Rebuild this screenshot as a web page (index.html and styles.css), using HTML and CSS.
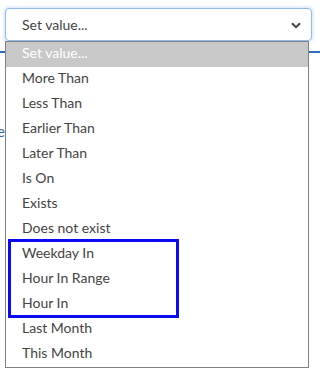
FILE: index.html
```html
<!DOCTYPE html>
<html>
<head>
<meta charset="utf-8">
<link rel="stylesheet" href="styles.css">
</head>
<body>
<div class="field-wrap">
  <div class="select">
    <span class="select-text">Set value...</span>
    <svg class="chevron" width="10" height="7" viewBox="0 0 10 7"><path d="M1 1.2 L5 5.2 L9 1.2" fill="none" stroke="#444" stroke-width="2"/></svg>
  </div>
  <ul class="menu">
    <li class="item selected">Set value...</li>
    <li class="item">More Than</li>
    <li class="item">Less Than</li>
    <li class="item">Earlier Than</li>
    <li class="item">Later Than</li>
    <li class="item">Is On</li>
    <li class="item">Exists</li>
    <li class="item">Does not exist</li>
    <li class="item">Weekday In</li>
    <li class="item">Hour In Range</li>
    <li class="item">Hour In</li>
    <li class="item">Last Month</li>
    <li class="item">This Month</li>
    <li class="highlight"></li>
  </ul>
</div>
<div class="backdrop">
  <div class="behind-text">e</div>
</div>
</body>
</html>
```
FILE: styles.css
```css
html, body {
  margin: 0;
  padding: 0;
  background: #ffffff;
  font-family: Lato, "Open Sans", sans-serif;
  font-size: 14px;
  color: #333333;
}

body {
  min-height: 374px;
  overflow: hidden;
}

.field-wrap {
  position: relative;
  margin: 8px 8px 0 5px;
}

.select {
  box-sizing: border-box;
  height: 33px;
  border: 1px solid #8fbcec;
  border-radius: 4px;
  box-shadow: 0 0 3px 1px rgba(120, 170, 230, 0.35);
  padding: 0 10px 0 16px;
  display: flex;
  align-items: center;
  justify-content: space-between;
  background: #fff;
}

.select-text {
  color: #444;
}

.chevron {
  display: block;
  margin-top: 1px;
}

.menu {
  position: absolute;
  top: 33px;
  left: 0;
  width: 304px;
  box-sizing: border-box;
  margin: 0;
  padding: 0;
  list-style: none;
  background: #ffffff;
  border: 1px solid #808080;
  z-index: 2;
}

.item {
  height: 22px;
  line-height: 22px;
  padding: 0 0 3px 16px;
  color: #444;
  white-space: nowrap;
}

.item.selected {
  background: #c8c8c8;
  color: #ffffff;
}

.highlight {
  position: absolute;
  left: 2px;
  top: 197px;
  width: 171px;
  height: 79px;
  box-sizing: border-box;
  border: 3px solid #0a0af5;
}

.backdrop {
  margin-top: 10px;
  border-top: 2px solid #2b6cb3;
}

.behind-text {
  margin-top: 69px;
  margin-left: -3px;
  font-size: 15px;
  color: #3d6a9e;
}
```
